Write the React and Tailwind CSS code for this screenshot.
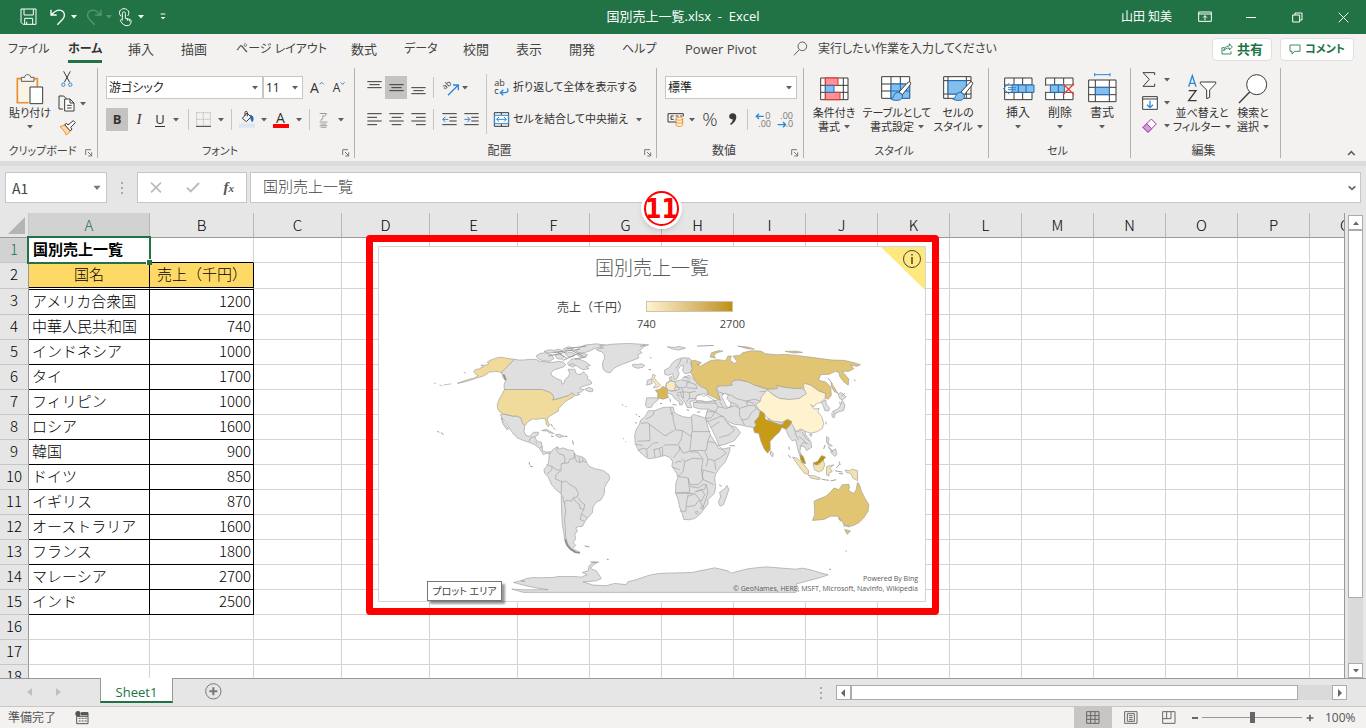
import React from "react";

const UI_FONT = "[font-family:'Open_Sans','Noto_Sans_CJK_JP',sans-serif]";
const CELL_FONT = "[font-family:'Noto_Sans_CJK_JP',sans-serif]";

// icons are drawn on a grid three times finer than the screen
function Icon({ w, h, children, className = "" }) {
  return (
    <svg
      width={w}
      height={h}
      viewBox={`0 0 ${w * 3} ${h * 3}`}
      fill="none"
      stroke="#3b3a39"
      strokeWidth="3"
      className={`shrink-0 overflow-visible ${className}`}
      aria-hidden="true"
    >
      {children}
    </svg>
  );
}

function Caret({ className = "text-[#605e5c]" }) {
  return (
    <svg width="6" height="4" viewBox="0 0 6 4" className={`shrink-0 ${className}`} aria-hidden="true">
      <path d="M0 0h6L3 3.5z" fill="currentColor" />
    </svg>
  );
}

function Sep({ className = "h-[22px]" }) {
  return <span className={`w-px shrink-0 bg-[#c8c6c4] ${className}`} />;
}

/* ---------- title bar ---------- */

function TitleBar() {
  return (
    <header className="grid h-[34px] shrink-0 grid-cols-[1fr_auto_1fr] items-center bg-[#217346] text-[12px] text-white">
      <div className="flex items-center pl-5">
        <button aria-label="上書き保存">
          <Icon w={18} h={18}>
            <path d="M3 3h45v46H9l-6-6zM12 3v18h28V3M14 49V31h24v18M20 49v-8" stroke="#fff" />
          </Icon>
        </button>
        <button aria-label="元に戻す" className="ml-3 flex items-center gap-1">
          <Icon w={17} h={18}>
            <path d="M3 5v16h17M4 20C16 8 26 4 35 8c10 5 11 17 3 26L22 50" stroke="#fff" strokeWidth="4" />
          </Icon>
          <Caret className="text-white" />
        </button>
        <button aria-label="やり直し" className="ml-2 flex items-center gap-1 opacity-25">
          <Icon w={17} h={18}>
            <path d="M48 5v16H31M47 20C35 8 25 4 16 8 6 13 5 25 13 34l16 16" stroke="#fff" strokeWidth="4" />
          </Icon>
          <Caret className="text-white" />
        </button>
        <button aria-label="タッチ/マウス モード" className="ml-1.5 flex items-center gap-1.5">
          <Icon w={14} h={18}>
            <path
              d="M9 25C-2 13 8 2 18 2s20 10 11 22M13 34V16c0-6 9-6 9 0v15l13 3c4 1 5 4 4 8-1 7-4 11-12 11-8 0-14-5-19-13-3-5 3-7 5-3zM28 32v6M34 34v6"
              stroke="#fff"
            />
          </Icon>
          <Caret className="text-white" />
        </button>
        <button aria-label="クイック アクセス ツール バーのユーザー設定" className="ml-4">
          <Icon w={6} h={8}>
            <path d="M2 3h14" stroke="#fff" />
            <path d="M2 12h14l-7 7z" fill="#fff" stroke="none" />
          </Icon>
        </button>
      </div>
      <h1 className="whitespace-pre text-[13px]">国別売上一覧.xlsx  -  Excel</h1>
      <div className="flex items-center justify-end">
        <span className="mr-2.5">山田 知美</span>
        <button aria-label="リボンの表示オプション" className="flex w-[46px] justify-center">
          <Icon w={14} h={12}>
            <path d="M2 3h38v28H2zM2 9h38M21 28V14M15 20l6-6 6 6" stroke="#fff" />
          </Icon>
        </button>
        <button aria-label="最小化" className="flex w-[46px] justify-center">
          <span className="h-px w-2.5 bg-white" />
        </button>
        <button aria-label="元に戻す (縮小)" className="flex w-[46px] justify-center">
          <Icon w={11} h={11}>
            <path d="M2 9h21v21H2zM9 9V3h21v21h-7" stroke="#fff" />
          </Icon>
        </button>
        <button aria-label="閉じる" className="flex w-[46px] justify-center">
          <Icon w={11} h={11}>
            <path d="M2 2l29 29M31 2L2 31" stroke="#fff" />
          </Icon>
        </button>
      </div>
    </header>
  );
}

const TABS = [
  ["ファイル", "w-[60px] text-[12px]"],
  ["ホーム", "w-[60px] text-[12px]"],
  ["挿入", "w-[53px]"],
  ["描画", "w-[55px]"],
  ["ページ レイアウト", "w-[115px] text-[12px]"],
  ["数式", "w-[53px]"],
  ["データ", "w-[59px] text-[12px]"],
  ["校閲", "w-[53px]"],
  ["表示", "w-[53px]"],
  ["開発", "w-[53px]"],
  ["ヘルプ", "w-[63px] text-[12px]"],
  ["Power Pivot", "w-[108px]"],
];

function TabRow() {
  return (
    <nav className="flex h-[30px] shrink-0 items-center bg-[#f3f2f1] pl-2 text-[13px] leading-[18px] text-[#444] [font-feature-settings:'palt']">
      {TABS.map(([name, width]) => (
        <button key={name} className={`shrink-0 text-left ${width}`}>
          {name === "ホーム" ? (
            <span className="inline-block border-b-[3px] border-[#217346] pt-[3px] font-bold leading-[22px] text-[#333]">
              {name}
            </span>
          ) : (
            name
          )}
        </button>
      ))}
      <label className="flex flex-1 items-center gap-2.5">
        <Icon w={15} h={16}>
          <circle cx="28" cy="16" r="13" stroke="#605e5c" />
          <path d="M19 26L3 43" stroke="#605e5c" />
        </Icon>
        <input
          type="text"
          placeholder="実行したい作業を入力してください"
          className="w-[220px] bg-transparent text-[12px] outline-none placeholder:text-[#444]"
        />
      </label>
      <button className="mr-2 flex h-[23px] w-[60px] items-center justify-center gap-1 rounded-sm border border-[#e1dfdd] bg-white font-bold text-[#217346]">
        <Icon w={12} h={12}>
          <path d="M11 14H3v19h27v-8M8 24c1-10 8-15 17-15V2l9 10-9 9v-6c-8 0-13 3-17 9z" stroke="#217346" strokeWidth="2.5" />
        </Icon>
        共有
      </button>
      <button className="mr-[12px] flex h-[23px] w-[74px] items-center justify-center gap-1 rounded-sm border border-[#e1dfdd] bg-white text-[11px] font-bold text-[#217346]">
        <Icon w={12} h={11}>
          <path d="M3 3h30v19H17l-8 8v-8H3z" stroke="#217346" strokeWidth="2.5" />
        </Icon>
        コメント
      </button>
    </nav>
  );
}

/* ---------- ribbon ---------- */

function Group({ label, width, launcher, size = "text-[12px]", children }) {
  return (
    <section className={`flex h-[90px] shrink-0 flex-col border-r border-[#b3b0ad] ${width}`}>
      <div className="h-[77px]">{children}</div>
      <div className="flex h-[14px] items-center pr-1">
        <h2 className={`flex-1 whitespace-nowrap text-center leading-[14px] text-[#444] ${size}`}>{label}</h2>
        {launcher && (
          <button aria-label={`${label}の設定`} className="pt-1">
            <Icon w={8} h={8}>
              <path d="M2 18V2h16M9 9l10 10M20 10v11H10" stroke="#605e5c" strokeWidth="2.5" />
            </Icon>
          </button>
        )}
      </div>
    </section>
  );
}

function BigButton({ icon, line1, line2, width, size = "text-[11px]" }) {
  return (
    <button className={`flex shrink-0 flex-col items-center pt-1 leading-[14px] text-[#333] ${width} ${size}`}>
      <span className="flex h-[34px] items-center">{icon}</span>
      <span className="whitespace-nowrap">{line1}</span>
      <span className="flex h-[14px] items-center gap-1 whitespace-nowrap">
        {line2}
        <Caret />
      </span>
    </button>
  );
}

function Tool({ label, on, children, className = "w-[22px]" }) {
  return (
    <button
      aria-label={label}
      className={`flex h-[23px] shrink-0 items-center justify-center ${on ? "bg-[#c5c3c1]" : ""} ${className}`}
    >
      {children}
    </button>
  );
}

function Combo({ label, value, width }) {
  return (
    <label className={`relative flex h-[23px] shrink-0 items-center border border-[#c8c6c4] bg-white ${width}`}>
      <select aria-label={label} defaultValue={value} className="w-full appearance-none bg-transparent px-[2px] text-[12px] text-[#222] outline-none">
        <option>{value}</option>
      </select>
      <Caret className="pointer-events-none absolute right-1 text-[#605e5c]" />
    </label>
  );
}

function ClipboardGroup() {
  return (
    <Group label="クリップボード" width="w-[98px]" size="text-[11px]" launcher>
      <div className="flex pl-1">
        <BigButton
          width="w-[52px]"
          line1="貼り付け"
          icon={
            <Icon w={28} h={31}>
              <path d="M17 14H4v72h34M54 14h10v24" stroke="#e8912d" strokeWidth="5" />
              <path d="M9 18h50v20H40v45H9z" fill="#fdf3e4" stroke="none" />
              <path d="M16 22V10h10c0-11 18-11 18 0h10v12z" fill="#f3f2f1" stroke="#605e5c" />
              <path d="M42 39h38v50H42z" fill="#fff" />
            </Icon>
          }
        />
        <div className="flex flex-col gap-px">
          <Tool label="切り取り">
            <Icon w={12} h={17}>
              <path d="M8 1l18 33M28 1L10 34" />
              <circle cx="7" cy="41" r="5" stroke="#2b88d8" />
              <circle cx="28" cy="41" r="5" stroke="#2b88d8" />
            </Icon>
          </Tool>
          <Tool label="コピー" className="w-[32px] gap-[5px]">
            <Icon w={17} h={17}>
              <path d="M15 42H3V3h14l9 9v5" />
              <path d="M20 12h16l12 12v24H20zM36 12v12h12M27 31h14M27 39h14" fill="#fff" />
            </Icon>
            <Caret />
          </Tool>
          <Tool label="書式のコピー/貼り付け">
            <Icon w={17} h={16}>
              <path d="M3 20l14-5 18 18-13 12C17 35 10 26 3 20z" fill="#fdd9a8" stroke="#e8912d" />
              <path d="M17 14l6-4 4 5L43 2l6 6-14 14 4 5-5 6z" fill="#fff" />
            </Icon>
          </Tool>
        </div>
      </div>
    </Group>
  );
}

function FontGroup() {
  return (
    <Group label="フォント" width="w-[257px]" size="text-[11px]" launcher>
      <div className="flex flex-col gap-[9px] pl-2 pt-2">
        <div className="flex">
          <Combo label="フォント" value="游ゴシック" width="w-[157px]" />
          <Combo label="フォント サイズ" value="11" width="w-[40px]" />
          <Tool label="フォント サイズの拡大" className="ml-[3px] w-[22px] text-[14px] text-[#333]">
            A
            <Icon w={5} h={14}>
              <path d="M2 10l6-6 6 6" stroke="#2b88d8" />
            </Icon>
          </Tool>
          <Tool label="フォント サイズの縮小" className="w-[22px] text-[12px] text-[#333]">
            A
            <Icon w={5} h={14}>
              <path d="M2 4l6 6 6-6" stroke="#2b88d8" />
            </Icon>
          </Tool>
        </div>
        <div className="flex items-center text-[#333]">
          <Tool label="太字" on>
            <span className="text-[13px] font-bold">B</span>
          </Tool>
          <Tool label="斜体">
            <span className="font-['Liberation_Serif'] text-[15px] italic">I</span>
          </Tool>
          <Tool label="下線" className="w-[34px] gap-2">
            <span className="border-b border-[#333] text-[13px] leading-[13px]">U</span>
            <Caret />
          </Tool>
          <Sep className="ml-1 h-[21px]" />
          <Tool label="罫線" className="ml-0.5 w-[38px] gap-[7px]">
            <Icon w={15} h={15}>
              <path d="M2 2h42M2 22h42M2 2v38M22 2v38M43 2v38" stroke="#8a8886" strokeWidth="2" strokeDasharray="3 3" />
              <path d="M0 43h45" />
            </Icon>
            <Caret />
          </Tool>
          <Sep className="ml-0.5 h-[21px]" />
          <Tool label="塗りつぶしの色" className="ml-1 w-[34px] gap-1.5">
            <Icon w={16} h={17}>
              <path d="M10 22L24 6l12 12-14 14zM18 14V4c0-4 7-4 7 0v12" />
              <path d="M35 13c8 2 9 12 5 19-3-3-5-8-5-19z" fill="#1f6bb5" stroke="#1f6bb5" />
              <path d="M0 37h48v13H0z" fill="#d9e7f5" stroke="none" />
            </Icon>
            <Caret />
          </Tool>
          <Tool label="フォントの色" className="w-[34px] gap-[7px]">
            <span className="w-4 border-b-4 border-[#f00] text-center text-[14px] leading-[13px]">A</span>
            <Caret />
          </Tool>
          <Sep className="ml-[5px] h-[21px]" />
          <Tool label="ふりがなの表示/非表示" className="ml-1 w-[34px] gap-2.5 text-[#8a8886]">
            <span className="flex flex-col items-center text-[9px] leading-[9px]">
              ア
              <Icon w={9} h={7}>
                <path d="M2 3h23M5 9h17M2 14h23M5 19h17" stroke="#797775" strokeWidth="2" />
              </Icon>
            </span>
            <Caret />
          </Tool>
        </div>
      </div>
    </Group>
  );
}

function Lines({ d }) {
  return (
    <Icon w={15} h={15}>
      <path d={d} />
    </Icon>
  );
}

function AlignGroup() {
  return (
    <Group label="配置" width="w-[302px]" launcher>
      <div className="flex pl-2 pt-2">
        <div className="flex flex-col gap-[9px]">
          <div className="flex items-center">
            <Tool label="上揃え"><Lines d="M1 5h43M7 14h31M1 23h43" /></Tool>
            <Tool label="上下中央揃え" on><Lines d="M1 14h43M7 23h31M1 32h43" /></Tool>
            <Tool label="下揃え"><Lines d="M1 23h43M7 32h31M1 41h43" /></Tool>
            <Sep className="ml-1 h-[21px]" />
            <Tool label="方向" className="ml-1 w-[34px] gap-0.5">
              <Icon w={18} h={16}>
                <text x="6" y="28" fontSize="24" fill="#3b3a39" stroke="none" transform="rotate(-40 10 26)">ab</text>
                <path d="M18 46l30-30M33 15h16v16" stroke="#2b88d8" strokeWidth="4" />
              </Icon>
              <Caret />
            </Tool>
          </div>
          <div className="flex items-center">
            <Tool label="左揃え"><Lines d="M1 5h43M1 16h29M1 27h43M1 38h29" /></Tool>
            <Tool label="中央揃え"><Lines d="M1 5h43M8 16h29M1 27h43M8 38h29" /></Tool>
            <Tool label="右揃え"><Lines d="M1 5h43M15 16h29M1 27h43M15 38h29" /></Tool>
            <Sep className="ml-1 h-[21px]" />
            <Tool label="インデントを減らす" className="ml-1 w-[22px]">
              <Icon w={15} h={15}>
                <path d="M1 5h43M22 16h22M22 27h22M1 38h43" />
                <path d="M19 22H3M10 14l-8 8 8 8" stroke="#2b88d8" />
              </Icon>
            </Tool>
            <Tool label="インデントを増やす">
              <Icon w={15} h={15}>
                <path d="M1 5h43M22 16h22M22 27h22M1 38h43" />
                <path d="M1 22h16M10 14l8 8-8 8" stroke="#2b88d8" />
              </Icon>
            </Tool>
          </div>
        </div>
        <Sep className="ml-1 -mt-[2px] h-[60px]" />
        <div className="flex flex-col gap-[9px] pl-[7px] text-[11px] text-[#333]">
          <button className="flex h-[23px] items-center gap-1 whitespace-nowrap">
            <Icon w={15} h={17}>
              <text x="1" y="22" fontSize="27" fill="#3b3a39" stroke="none">ab</text>
              <text x="1" y="46" fontSize="27" fill="#3b3a39" stroke="none">c</text>
              <path d="M40 28c6 9 0 13-8 13H20M28 32l-9 9 9 8" stroke="#2b88d8" strokeWidth="4" />
            </Icon>
            折り返して全体を表示する
          </button>
          <button className="flex h-[23px] items-center gap-1 whitespace-nowrap">
            <Icon w={15} h={15}>
              <path d="M1 2h43v41H1zM22 2v8M22 35v8" />
              <path d="M2 10h41v25H2z" fill="#fff" stroke="#2b88d8" />
              <path d="M8 22h29M15 15l-7 7 7 7M30 15l7 7-7 7" stroke="#2b88d8" />
            </Icon>
            セルを結合して中央揃え
            <span className="ml-1"><Caret /></span>
          </button>
        </div>
      </div>
    </Group>
  );
}

function NumberGroup() {
  return (
    <Group label="数値" width="w-[147px]" launcher>
      <div className="flex flex-col gap-[9px] pl-2 pt-2">
        <Combo label="数値の書式" value="標準" width="w-[132px]" />
        <div className="flex items-center text-[#333]">
          <Tool label="通貨表示形式" className="w-[32px] gap-[5px]">
            <Icon w={17} h={15}>
              <path d="M28 30H3V5h46v8M20 12h-8v10h8M26 12h8M40 12h6" />
              <path d="M27 20v18c0 7 20 7 20 0V20c0-6-20-6-20 0c0 6 20 6 20 0M27 29c0 6 20 6 20 0" fill="#fff3e0" stroke="#e8912d" />
            </Icon>
            <Caret />
          </Tool>
          <Tool label="パーセント スタイル" className="w-[26px] text-[19px] font-light">%</Tool>
          <Tool label="桁区切りスタイル" className="w-[20px]">
            <Icon w={8} h={13}>
              <path d="M11 1c16 0 15 24-5 35l-3-3c6-5 9-10 8-14C-3 20-3 2 11 1z" fill="#3b3a39" stroke="none" />
            </Icon>
          </Tool>
          <Sep className="ml-1 h-[21px]" />
          <Tool label="小数点以下の表示桁数を増やす" className="ml-1 w-[22px]">
            <Icon w={16} h={16}>
              <path d="M26 13H4M12 5l-8 8 8 8" stroke="#2b88d8" strokeWidth="4" />
              <text x="31" y="22" fontSize="27" fill="#797775" stroke="none">0</text>
              <text x="10" y="46" fontSize="27" fill="#797775" stroke="none">.00</text>
            </Icon>
          </Tool>
          <Tool label="小数点以下の表示桁数を減らす">
            <Icon w={16} h={16}>
              <path d="M2 38h24M18 30l8 8-8 8" stroke="#2b88d8" strokeWidth="4" />
              <text x="10" y="22" fontSize="27" fill="#797775" stroke="none">.00</text>
              <text x="26" y="46" fontSize="27" fill="#797775" stroke="none">.0</text>
            </Icon>
          </Tool>
        </div>
      </div>
    </Group>
  );
}

const brush = (
  <>
    <path d="M87 24c4 2 2 6-2 12L64 62l-10-8 24-26c4-4 7-5 9-4z" fill="#fff" />
    <path d="M54 55l10 8c2 8-4 16-14 16-10 1-18-2-22-5 8 0 8-4 11-10 3-7 8-10 15-9z" fill="#83beec" stroke="#1f6bb5" />
  </>
);

function StyleGroup() {
  return (
    <Group label="スタイル" width="w-[185px]" size="text-[11px]">
      <div className="flex pl-px">
        <BigButton
          width="w-[58px]"
          line1="条件付き"
          line2="書式"
          icon={
            <Icon w={29} h={24}>
              <path d="M2 3h82v65H2zM2 25h82M2 46h82M16 3v65M70 3v65" fill="#fff" />
              <path d="M16 3h38v22H16zM16 46h44v22H16z" fill="#ff9199" stroke="#e0301e" />
              <path d="M16 25h26v21H16z" fill="#83beec" stroke="#1f6bb5" />
            </Icon>
          }
        />
        <BigButton
          width="w-[68px]"
          line1="テーブルとして"
          line2="書式設定"
          icon={
            <Icon w={32} h={30}>
              <path d="M2 8h84v65H2zM2 30h84M2 51h84M30 8v65M58 8v65" fill="#fff" />
              <path d="M30 30h56v43H30z" fill="#83beec" stroke="none" />
              <path d="M30 30h56v43H30zM30 51h56M58 30v43" stroke="#1f6bb5" />
              {brush}
            </Icon>
          }
        />
        <BigButton
          width="w-[54px]"
          line1="セルの"
          line2="スタイル"
          icon={
            <Icon w={31} h={30}>
              <path d="M2 8h82v65H2zM2 20h82M2 60h82M15 8v65M70 8v65" fill="#fff" />
              <path d="M15 20h55v40H15z" fill="#83beec" stroke="#1f6bb5" />
              {brush}
            </Icon>
          }
        />
      </div>
    </Group>
  );
}

function CellGroup() {
  return (
    <Group label="セル" width="w-[142px]" size="text-[11px]">
      <div className="flex pl-2">
        <BigButton
          width="w-[42px]"
          size="text-[12px]"
          line1="挿入"
          icon={
            <Icon w={33} h={24}>
              <path d="M8 3h82v65H8zM36 3v65M62 3v65M8 24h82M8 46h82" fill="#fff" />
              <path d="M30 24h66v22H30zM49 24v22M72 24v22" fill="#83beec" stroke="#1f6bb5" />
              <path d="M42 32H18M42 38H18M22 18L4 35l18 17" stroke="#2b88d8" />
            </Icon>
          }
        />
        <BigButton
          width="w-[42px]"
          size="text-[12px]"
          line1="削除"
          icon={
            <Icon w={31} h={24}>
              <path d="M2 3h82v65H2zM29 3v65M56 3v65M2 24h82M2 46h82" fill="#fff" />
              <path d="M0 26h16v18H0zM60 26h28v18H60z" fill="#f3f2f1" stroke="none" />
              <path d="M16 24h42v22H16zM40 24v22" fill="#83beec" stroke="#1f6bb5" />
              <path d="M54 20l33 33M87 20L54 53" stroke="#e8423a" strokeWidth="4" />
            </Icon>
          }
        />
        <BigButton
          width="w-[42px]"
          size="text-[12px]"
          line1="書式"
          icon={
            <Icon w={29} h={34}>
              <path d="M2 24h82v65H2zM22 24v65M64 24v65M2 46h82M2 68h82" fill="#fff" />
              <path d="M22 46h42v22H22z" fill="#83beec" stroke="#1f6bb5" />
              <path d="M20 8h46M20 3v10M66 3v10" stroke="#2b88d8" />
            </Icon>
          }
        />
      </div>
    </Group>
  );
}

function EditGroup() {
  return (
    <Group label="編集" width="w-[150px]">
      <div className="flex pl-2">
        <div className="flex w-[34px] flex-col">
          <Tool label="オート SUM" className="w-[34px] gap-2">
            <Icon w={14} h={15}>
              <path d="M38 9V2H3l19 20L3 43h35v-8" />
            </Icon>
            <Caret />
          </Tool>
          <Tool label="フィル" className="w-[34px] gap-1.5">
            <Icon w={16} h={14}>
              <path d="M2 2h44v38H2zM2 9h44" fill="#fff" />
              <path d="M24 14v20M15 26l9 9 9-9" stroke="#2b88d8" strokeWidth="4" />
            </Icon>
            <Caret />
          </Tool>
          <Tool label="クリア" className="w-[34px] gap-1.5">
            <Icon w={16} h={15}>
              <path d="M3 28L28 3l15 15-25 25z" fill="#fff" stroke="#a33bab" />
              <path d="M3 28l11-11 15 15-11 11z" fill="#d59ddb" stroke="#a33bab" />
            </Icon>
            <Caret />
          </Tool>
        </div>
        <BigButton
          width="w-[58px]"
          line1="並べ替えと"
          line2="フィルター"
          icon={
            <Icon w={30} h={30}>
              <path d="M5 38L16 5l11 33M9 28h14" stroke="#2b88d8" strokeWidth="4" />
              <path d="M5 50h22L5 80h24" strokeWidth="4" />
              <path d="M40 24h46v5L68 48v22l-9 4V48L40 29z" fill="#fff" />
            </Icon>
          }
        />
        <BigButton
          width="w-[44px]"
          line1="検索と"
          line2="選択"
          icon={
            <Icon w={30} h={30}>
              <circle cx="56" cy="32" r="30" fill="#fff" />
              <path d="M35 54L3 87" strokeWidth="4" />
            </Icon>
          }
        />
      </div>
    </Group>
  );
}

function Ribbon() {
  return (
    <div className="flex h-[97px] shrink-0 bg-[#f3f2f1] pt-1 [font-feature-settings:'palt']">
      <ClipboardGroup />
      <FontGroup />
      <AlignGroup />
      <NumberGroup />
      <StyleGroup />
      <CellGroup />
      <EditGroup />
      <div className="flex flex-1 items-end justify-end pb-1 pr-2.5">
        <button aria-label="リボンを折りたたむ">
          <Icon w={9} h={7}>
            <path d="M3 15l10-10 10 10" stroke="#605e5c" strokeWidth="5" />
          </Icon>
        </button>
      </div>
    </div>
  );
}

function FormulaBar() {
  return (
    <div className="flex h-[52px] shrink-0 items-start border-t-[5px] border-[#dcdcdc] bg-[#e6e6e6] pl-[5px] pr-[5px] pt-1.5 text-[#444]">
      <label className="relative flex h-[31px] w-[102px] shrink-0 items-center border border-[#c6c6c6] bg-white">
        <input aria-label="名前ボックス" defaultValue="A1" className={`w-full bg-transparent px-1.5 pt-0.5 text-[14px] outline-none ${CELL_FONT}`} />
        <Caret className="absolute right-1.5 scale-125 text-[#777]" />
      </label>
      <span className="flex h-[31px] w-[30px] flex-col items-center justify-center gap-[3px]">
        <i className="size-0.5 bg-[#aaa]" />
        <i className="size-0.5 bg-[#aaa]" />
        <i className="size-0.5 bg-[#aaa]" />
      </span>
      <div className="mr-[3px] flex h-[31px] w-[110px] shrink-0 items-center justify-around border border-[#c6c6c6] bg-white">
        <button aria-label="キャンセル">
          <Icon w={12} h={11}>
            <path d="M3 2l30 29M33 2L3 31" stroke="#bbb" strokeWidth="5" />
          </Icon>
        </button>
        <button aria-label="入力">
          <Icon w={14} h={11}>
            <path d="M3 17l11 11L39 3" stroke="#bbb" strokeWidth="6" />
          </Icon>
        </button>
        <button aria-label="関数の挿入" className="font-['Liberation_Serif'] text-[15px] font-bold italic leading-5 text-[#555]">
          f<span className="text-[11px]">x</span>
        </button>
      </div>
      <label className="flex h-[31px] flex-1 items-center border border-[#c6c6c6] bg-white pr-1">
        <input aria-label="数式バー" defaultValue="国別売上一覧" className={`flex-1 bg-transparent px-3 pb-0.5 text-[15px] font-light outline-none ${CELL_FONT}`} />
        <Icon w={8} h={6}>
          <path d="M2 4l10 9 10-9" stroke="#666" strokeWidth="5" />
        </Icon>
      </label>
    </div>
  );
}

/* ---------- sheet ---------- */

const COLUMNS = ["A", "B", "C", "D", "E", "F", "G", "H", "I", "J", "K", "L", "M", "N", "O", "P", "Q"];

const SALES = [
  ["アメリカ合衆国", 1200],
  ["中華人民共和国", 740],
  ["インドネシア", 1000],
  ["タイ", 1700],
  ["フィリピン", 1000],
  ["ロシア", 1600],
  ["韓国", 900],
  ["ドイツ", 850],
  ["イギリス", 870],
  ["オーストラリア", 1600],
  ["フランス", 1800],
  ["マレーシア", 2700],
  ["インド", 2500],
];

function colWidth(i) {
  if (i === 0) return "w-[121px]";
  if (i === 1) return "w-[104px]";
  return i < 5 ? "w-[88px]" : "w-[72px]";
}

function rowHead(n, on) {
  return (
    <th
      scope="row"
      className={`border-b border-r border-b-[#c6c6c6] border-r-[#999] p-0 text-center font-light ${
        on ? "bg-[#d2d2d2] text-[#217346]" : "bg-[#e6e6e6] text-black"
      }`}
    >
      {n}
    </th>
  );
}

function Blank({ from }) {
  return COLUMNS.slice(from).map((c) => <td key={c} className="border-b border-r border-[#d4d4d4] p-0" />);
}

function Grid() {
  return (
    <table className={`w-[1382px] table-fixed border-separate border-spacing-0 bg-white text-[15px] font-light leading-[22px] text-black ${CELL_FONT}`}>
      <colgroup>
        <col className="w-[29px]" />
        {COLUMNS.map((c, i) => (
          <col key={c} className={colWidth(i)} />
        ))}
      </colgroup>
      <thead>
        <tr className="h-[25px]">
          <th aria-label="すべて選択" className="border-b border-r border-b-[#999] border-r-[#c6c6c6] bg-[#e6e6e6] p-0">
            <Icon w={17} h={17} className="ml-2">
              <path d="M51 0v51H0z" fill="#b4b4b4" stroke="none" />
            </Icon>
          </th>
          {COLUMNS.map((c, i) => (
            <th
              key={c}
              scope="col"
              className={`border-b border-r border-b-[#999] border-r-[#b8b8b8] p-0 font-light ${
                i === 0 ? "bg-[#d2d2d2] text-[#217346]" : "bg-[#e6e6e6]"
              }`}
            >
              {c}
            </th>
          ))}
        </tr>
      </thead>
      <tbody className="align-top">
        <tr className="h-[25px]">
          {rowHead(1, true)}
          <td className="border-b border-r border-b-black border-r-[#d4d4d4] p-0 pl-1 font-bold">国別売上一覧</td>
          <td className="border-b border-r border-b-black border-r-[#d4d4d4] p-0" />
          <Blank from={2} />
        </tr>
        <tr className="h-[26px]">
          {rowHead(2)}
          <td className="border-b border-r border-b-white border-r-black bg-[#ffd966] p-0 text-center shadow-[inset_0_-1px_0_#000]">国名</td>
          <td className="border-b border-r border-b-white border-r-black bg-[#ffd966] p-0 pl-[7px] shadow-[inset_0_-1px_0_#000]">売上（千円）</td>
          <Blank from={2} />
        </tr>
        {SALES.map(([country, amount], i) => (
          <tr key={country} className={i === 0 ? "h-[26px]" : "h-[25px]"}>
            {rowHead(i + 3)}
            <td className={`border-b border-r border-black p-0 pl-[3px] ${i === 0 ? "border-t" : ""}`}>{country}</td>
            <td className={`border-b border-r border-black p-0 pr-0.5 text-right ${i === 0 ? "border-t" : ""}`}>{amount}</td>
            <Blank from={2} />
          </tr>
        ))}
        {[16, 17, 18].map((n) => (
          <tr key={n} className="h-[25px]">
            {rowHead(n)}
            <Blank from={0} />
          </tr>
        ))}
      </tbody>
    </table>
  );
}

/* ---------- map chart ---------- */

const GRAY_LAND = [
  // Canada
  "M443 372L403 410 410 420 417 435 412 447 412 458 413 463 526 463 530 466 546 470 555 475 562 486 558 495 575 490 590 486 605 482 617 473 626 482 640 478 632 474 645 470 653 463 640 461 645 455 662 450 677 445 673 437 664 432 664 422 655 414 652 409 646 415 636 418 628 413 625 402 605 402 610 415 605 425 595 433 592 445 587 447 585 436 570 430 555 420 553 412 562 404 575 400 590 395 598 388 590 380 575 378 560 381 540 380 520 378 508 372 490 372 470 374 455 374Z",
  "M655 462L668 456 680 462 678 470 664 468Z",
  // arctic islands
  "M603 384L614 372 630 369 645 374 658 380 672 390 660 394 668 400 650 403 640 398 630 391 618 388 608 392Z",
  "M508 362L520 354 538 352 556 358 562 370 548 378 528 376 515 370Z",
  "M532 348L548 343 562 345 575 341 590 346 578 352 560 351 545 353Z",
  "M565 360L580 356 592 362 588 372 572 370Z",
  "M596 355L612 350 626 356 620 364 604 364Z",
  "M590 340L606 334 622 338 612 345 598 346Z",
  "M626 346L640 336 655 329 690 325 718 329 704 336 685 339 672 346 655 352 638 352Z",
  "M632 356L650 354 664 358 654 366 638 364Z",
  "M610 388L620 384 626 392 616 396Z",
  // Greenland, Iceland
  "M707 349L695 346 690 342 712 337 700 331 740 326 790 324 848 328 835 333 821 345 828 352 815 358 818 368 805 373 790 379 770 386 750 395 740 402 733 412 722 411 712 404 709 393 709 380 715 370 714 358Z",
  "M798 389L805 386 815 388 825 385 836 390 830 396 815 399 803 395Z",
  // Mexico and Central America
  "M400 538L410 537 425 540 438 543 450 543 462 548 468 562 474 572 472 590 478 602 490 604 500 592 516 592 514 600 505 605 510 618 524 622 526 632 528 648 540 652 550 650 552 657 540 656 530 659 518 640 505 630 487 622 470 617 450 608 438 595 428 580 418 562 408 552Z",
  "M403 548L410 560 418 572 425 582 420 584 408 566Z",
  "M525 587L538 583 550 589 562 596 550 594 540 588Z",
  "M566 600L578 598 592 604 578 608Z",
  // South America
  "M548 660L556 647 565 640 573 635 578 643 590 639 605 645 620 647 624 655 632 663 645 665 657 673 662 685 668 694 685 702 710 707 728 720 731 732 722 745 715 758 714 777 705 795 690 803 680 817 678 835 665 849 655 862 648 876 635 877 628 880 633 890 625 900 628 913 620 925 628 933 618 943 640 954 625 955 610 945 600 933 594 915 592 895 587 870 586 845 585 815 584 777 570 767 555 750 545 727 534 715 532 705 540 695 546 683Z",
  // Antarctica
  "M440 1045L462 1040 480 1033 500 1030 520 1031 560 1030 575 1027 600 1027 625 1027 645 1029 662 1022 648 1015 665 1010 668 995 680 985 692 985 680 993 672 1003 690 1010 700 1025 705 1033 690 1040 670 1042 650 1043 680 1053 720 1055 745 1048 765 1050 780 1052 785 1043 810 1037 830 1030 850 1023 880 1018 905 1017 980 1015 1002 1010 1047 1001 1087 1010 1097 1017 1122 1010 1152 1003 1202 998 1252 1002 1292 1005 1312 1002 1337 1007 1362 1015 1390 1022 1367 1030 1322 1042 1292 1050 1300 1062 1292 1075 470 1075 435 1065 470 1067 545 1067 500 1060 470 1053Z",
];

// drawn in a frame whose origin is shifted 822 to the right
const GRAY_EAST = [
  // Africa, Madagascar
  "M43 527L25 527 15 545 2 555 -2 568 -12 585 -16 600 -15 625 -8 640 0 652 18 668 28 672 50 668 75 662 90 668 98 680 96 695 100 700 110 715 114 728 108 745 107 775 115 795 120 820 128 840 132 855 148 856 165 852 182 838 192 825 205 808 205 795 225 775 228 755 225 730 228 718 240 700 258 680 270 650 272 638 245 643 236 640 225 620 212 600 205 578 198 550 185 545 160 538 150 548 130 545 110 537 103 530 100 516 70 517Z",
  "M262 752L268 765 262 782 252 810 242 815 236 803 243 787 240 773 255 763Z",
  // Arabia
  "M198 548L215 580 232 615 238 633 260 627 285 617 303 593 290 577 275 572 262 562 250 542 225 530 203 530Z",
  // Europe
  "M20 488L48 488 56 492 48 500 38 508 35 516 22 518 16 510Z",
  "M80 442L92 437 105 438 125 434 132 425 150 420 160 430 200 460 210 478 190 476 172 480 165 495 150 500 156 518 142 517 135 500 124 488 112 476 118 490 130 500 128 508 120 510 118 500 104 490 96 478 82 474 75 460Z",
  "M75 418L73 405 88 397 98 382 110 373 128 367 148 368 157 377 153 385 158 400 150 413 135 415 128 405 132 390 122 392 113 405 118 415 112 430 103 434 98 415 86 420Z",
  "M88 426L96 424 97 434 90 437Z",
  "M22 435L34 431 37 445 20 450Z",
  "M82 334L102 336 117 333 137 338 117 344 100 341Z",
  // Turkey, Middle East, Central Asia
  "M160 502L180 497 200 501 225 497 240 492 235 470 232 460 240 450 275 440 290 433 330 440 360 455 385 462 400 480 380 500 372 540 347 578 325 575 305 570 285 568 265 560 250 543 240 545 215 556 202 560 198 545 204 522 180 522 162 516Z",
  // Mongolia, Korea, Japan
  "M383 463L412 451 440 457 480 459 500 465 505 475 480 491 450 494 420 490 400 478Z",
  "M546 502L560 494 562 507 572 520 568 528 557 526 553 512Z",
  "M598 476L606 472 622 485 610 494 602 490Z",
  "M610 496L618 510 614 526 600 530 588 536 580 530 596 522 604 512Z",
  "M578 536L588 538 586 548 580 546Z",
  // Nepal, Indochina, Sri Lanka, Philippines
  "M385 548L400 556 428 562 430 570 410 566 388 556Z",
  "M440 583L450 573 460 560 466 580 475 591 488 583 500 585 498 597 515 620 518 637 502 647 498 637 485 633 482 650 490 664 480 658 474 635 470 615 458 617 448 603Z",
  "M394 648L402 657 400 666 393 660Z",
  "M563 605L570 610 568 625 580 633 572 634 562 622Z",
  "M574 650L590 642 594 658 588 665 580 658Z",
];

const COLORED = [
  ["#f0db9d", "M443 372L420 369 408 366 395 366 383 370 372 374 361 380 366 386 356 390 342 389 350 395 340 398 338 401 328 402 322 405 321 411 328 418 334 421 322 428 300 434 272 443 272 445 300 438 330 428 350 422 360 416 368 410 376 410 384 408 395 409 403 412Z"],
  ["#f0db9d", "M413 463L526 463 546 470 555 475 562 486 558 495 580 490 590 486 605 482 617 473 623 478 620 486 605 494 593 502 585 512 577 520 575 528 560 537 547 545 542 552 545 562 549 570 545 575 539 568 537 552 525 550 510 553 497 552 484 560 474 572 468 565 462 548 450 543 438 543 425 540 410 537 398 530 392 520 391 508 397 492 405 478Z"],
];

const COLORED_EAST = [
  // Russia and its islands
  ["#e2c572", "M153 378L165 375 185 382 178 388 172 387 182 393 200 382 215 375 235 373 258 376 265 362 275 362 272 375 285 385 292 378 280 362 300 360 310 352 335 346 365 347 378 355 412 358 440 357 470 360 510 365 540 369 580 374 615 375 645 382 665 388 655 393 635 390 645 400 630 408 610 408 630 432 628 450 615 440 603 425 600 412 590 408 570 417 545 418 538 435 560 440 575 455 577 480 568 492 558 488 560 475 540 468 515 450 498 445 495 458 470 460 430 455 412 450 415 460 395 462 380 460 365 455 345 450 325 440 300 434 285 435 275 442 278 450 255 452 235 452 230 460 235 475 243 496 225 488 205 478 202 462 185 455 172 445 160 425 152 410 158 400Z"],
  ["#e2c572", "M577 443L585 455 597 475 585 468 578 455Z"],
  ["#e2c572", "M211 365L216 352 235 346 250 347 232 352 222 360 228 368Z"],
  ["#e2c572", "M295 332L325 335 345 341 325 340Z"],
  ["#e2c572", "M438 348L470 347 490 351 465 353Z"],
  // UK, France, Germany
  ["#fbe9bb", "M38 418L46 420 43 428 50 438 62 450 56 455 40 458 48 448 42 440 36 430Z"],
  ["#d9b754", "M46 465L60 462 68 453 84 463 81 475 86 487 70 492 52 488 54 475Z"],
  ["#fbeabf", "M80 445L92 437 105 440 107 455 101 467 86 466 78 455Z"],
  // China
  ["#fff2cf", "M348 508L362 500 366 485 380 468 385 465 400 478 420 490 450 493 480 490 502 475 495 462 492 447 498 445 515 450 540 468 560 475 558 490 548 500 530 507 525 515 515 509 525 522 540 520 536 530 548 545 554 565 550 580 535 590 515 595 500 590 485 582 470 590 460 570 450 558 430 562 400 558 385 548 370 535 360 525Z"],
  ["#fff2cf", "M511 597L519 598 515 605Z"],
  // India
  ["#c89b17", "M363 527L375 535 378 553 410 565 425 570 432 567 432 560 445 553 458 560 450 573 440 583 428 577 420 592 410 600 392 620 393 643 385 655 375 643 365 620 358 595 345 593 342 580 350 570 345 560 358 545Z"],
  // Malaysia
  ["#bf9000", "M482 660L492 665 500 687 490 684 484 673Z"],
  // Indonesia
  ["#f5e3ae", "M522 687L540 690 552 673 557 690 552 705 540 712 526 705Z"],
  ["#bf9000", "M522 685L535 680 548 662 560 667 545 683 532 691Z"],
  ["#f5e3ae", "M460 667L473 670 495 690 508 707 508 720 495 715 478 693Z"],
  ["#f5e3ae", "M508 722L525 723 545 731 540 735 515 730Z"],
  ["#f5e3ae", "M563 695L585 690 572 700 580 710 570 715 570 724 562 720Z"],
  ["#f5e3ae", "M618 706L632 708 640 703 656 708 656 738 642 730 635 715 625 715Z"],
  // Australia
  ["#e2c572", "M525 800L535 795 560 785 570 777 585 760 600 765 610 750 630 749 632 760 628 767 645 777 652 765 656 743 662 750 668 770 678 790 690 810 688 830 675 850 660 865 640 875 615 873 610 860 600 855 598 845 575 845 555 855 520 858 527 840 526 815Z"],
  ["#e2c572", "M617 885L635 890 625 900Z"],
];

const BORDERS = [
  // South America
  "M573 637L570 647 578 657 592 661 596 673 594 685 584 687 584 705M594 685L605 685 610 673 622 671 624 655M624 657L630 680 640 683 638 667M640 683L650 679 648 667M650 679L660 683M540 690L556 695 556 705 542 717M556 695L570 705 584 707 568 720 567 733 585 740 584 777M585 743L598 739 610 750 628 760 636 777 632 787 620 790 615 800 600 797 594 807 588 783M594 807L598 830 594 855 597 885 597 905 603 927 615 943M620 790L632 805 640 810 640 821 652 825 655 810 645 803 636 790M652 825L645 838 655 845 663 851M645 838L641 855 655 861",
  // Central America and the Aleutians
  "M487 620L492 608 505 606M505 620L512 628M520 638L528 636M200 443L206 445M217 449L226 452M230 449L252 446M290 411L297 413M404 412L410 430 418 438",
];

const BORDERS_EAST = [
  // Africa
  "M3 565L22 563M28 567L30 617 -8 619M22 563L75 603 105 585M98 530L100 555 108 585 128 587 155 605 155 597 158 590 155 545M158 590L212 590M155 605L150 645 158 655M128 587L125 610 115 630 75 630 70 635M118 633L120 645 100 670M118 633L130 655 158 647M125 670L135 680 160 670 190 673 175 653 158 650M158 647L200 647 205 615 212 600M205 620L225 623 245 640 260 655 240 670 225 677 205 673 195 650M205 673L200 695M225 677L228 705M190 705L225 715M190 705L188 733 222 750M135 680L130 710 115 725 145 730 150 750 175 750 190 735 185 705 190 675M105 685L115 680 125 680M98 697L120 705M145 730L150 773 107 775 160 777M145 780L140 805 138 830 120 830M145 785L165 777 180 795 165 813 140 817M165 773L185 765 195 780 185 800 178 795M150 755L175 760 190 750 200 750 195 763 170 770M200 750L205 770 200 790 190 817M180 800L190 817 188 823M-8 647L10 640 20 643 40 625 55 623M20 643L22 667M42 643L45 667M58 640L62 663M68 640L68 663M40 645L68 637M-14 628L8 632M43 527L40 540 18 553M92 518L95 540",
  // Europe
  "M107 455L125 458 140 455 142 440M107 447L120 462 105 467M125 458L130 470 112 472M130 470L150 472 168 468M142 440L168 448 172 460 142 458M150 472L148 490 165 490M130 470L132 490M120 470L130 490M92 468L110 466M148 490L140 500M125 368L118 385 108 400M145 370L140 385M133 425L150 430M128 436L152 438",
  // Middle East and Central Asia
  "M162 502L230 505M225 497L235 515 228 530 203 530M205 522L225 530 250 545M235 515L260 520 285 512 300 520 300 540 315 570M240 500L250 515M275 512L262 495 250 490 250 475 275 480 290 490 320 498 345 505M300 520L325 512 345 510 350 520 335 535 325 552 305 555M268 500L285 505 300 515M320 498L325 512M360 470L380 468M320 498L345 492 362 498M350 520L365 530M238 470L250 475M262 562L285 585 268 600 238 608M200 550L215 548 225 532M213 578L240 560",
  // Indochina
  "M466 580L470 600 478 615M478 605L490 612 500 625M488 590L500 610 512 620M485 633L492 622 508 628",
];

// scattered small islands and coast details
const ISLETS =
  "M210 589L216 592M221 593L229 599M487 682L489 690M489 694L498 696M553 567L558 575M560 578L566 584M553 603L561 605M594 604L602 605M618 617L621 629M655 935L669 938M672 983L698 984M722 975L727 976M560 351L640 342M600 340L660 332M545 362L600 350M590 375L640 352M575 352L600 368M615 345L650 362M626 372L660 364M767 509L771 511M778 514L781 514M809 538L813 540M818 544L822 545M807 563L812 564M771 610L773 613M778 620L780 622M462 1040L475 1042M852 366L856 368M848 402L855 404";
const ISLETS_EAST =
  "M172 332L222 330M0 332L15 330M60 506L66 505M90 490L92 500M98 508L110 510M140 524L148 526M172 532L182 530M602 500L604 508M562 560L560 568M548 734L570 737M574 739L592 735M592 700L602 688M600 680L604 690M588 708L610 712M600 716L612 718M558 630L554 642M566 635L578 645M570 640L582 652M449 635L450 645M447 660L455 670M238 750L246 755M620 950L624 951M570 1005L576 1006M615 877L618 873 634 878M600 850L606 858 602 862M566 428L580 445M645 434L650 436M618 474L608 482M270 632L286 633";

function WorldMap() {
  return (
    <svg viewBox="36 33 1644 1068" className="absolute inset-0 size-full" role="img" aria-label="国別売上のマップ グラフ">
      <g stroke="#9f9f9f" strokeWidth="2" strokeLinejoin="round" fill="#dfdfdf">
        {GRAY_LAND.map((d) => (
          <path key={d} d={d} />
        ))}
        {COLORED.map(([fill, d]) => (
          <path key={d} d={d} fill={fill} />
        ))}
        <g fill="none">
          {BORDERS.map((d) => (
            <path key={d} d={d} />
          ))}
          <path d={ISLETS} stroke="#999" strokeWidth="3" />
          <path d="M596 915L602 932 613 945 628 954 640 956" stroke="#8c8c8c" strokeWidth="5" />
          <path d="M410 418L417 434" stroke="#9a9378" strokeWidth="6" />
        </g>
        <g transform="translate(822 0)">
          {GRAY_EAST.map((d) => (
            <path key={d} d={d} />
          ))}
          <g fill="none">
            {BORDERS_EAST.map((d) => (
              <path key={d} d={d} />
            ))}
          </g>
          <path d="M246 484L256 474 266 480 262 490 274 504 272 516 262 516 256 504Z" fill="#fff" />
          <path d="M168 496L170 482 184 478 190 484 200 480 215 490 226 496 200 500 182 496Z" fill="#fff" />
          {COLORED_EAST.map(([fill, d]) => (
            <path key={d} d={d} fill={fill} />
          ))}
          <circle cx="171" cy="834" r="4" />
          <circle cx="187" cy="820" r="4" />
          <path d={ISLETS_EAST} fill="none" stroke="#a3a3a3" strokeWidth="3" />
        </g>
      </g>
    </svg>
  );
}

function MapChart() {
  return (
    <figure className="relative h-full border border-[#d4d4d4] bg-white text-[#595959]">
      <WorldMap />
      <figcaption className={`pt-1.5 text-center text-[19px] font-light leading-7 ${CELL_FONT}`}>国別売上一覧</figcaption>
      <div className="mt-[18px] flex pl-[178px] text-[11px] leading-4 text-[#444]">
        <span className={`w-[80px] text-[12px] ${CELL_FONT}`}>売上（千円）</span>
        <div className="w-[105px]">
          <div className="mx-[9px] mt-0.5 h-[11px] border border-[#c9c4b4] bg-linear-to-r from-[#fff2cf] to-[#bf9000]" />
          <div className="mt-1 flex justify-between">
            <span>740</span>
            <span className="-mr-[3px]">2700</span>
          </div>
        </div>
      </div>
      <svg width="44" height="43" viewBox="0 0 44 43" className="absolute right-0 top-0" aria-hidden="true">
        <path d="M0 0h44v43z" fill="#ffe97f" />
        <circle cx="31" cy="12" r="8.5" fill="none" stroke="#444" />
        <path d="M31 10v7M31 7v1.5" stroke="#444" strokeWidth="1.5" />
      </svg>
      <p className="absolute bottom-[7px] right-[7px] whitespace-nowrap text-right text-[7px] leading-[10px]">
        Powered By Bing
        <br />© GeoNames, HERE, MSFT, Microsoft, NavInfo, Wikipedia
      </p>
      <span
        role="tooltip"
        className="absolute bottom-0 left-[48px] flex h-[20px] w-[75px] items-center justify-center whitespace-nowrap border border-[#767676] bg-white text-[10px] text-[#444] shadow-[3px_3px_2px_rgba(0,0,0,0.4)] [font-feature-settings:'palt']"
      >
        プロット エリア
      </span>
    </figure>
  );
}

function Sheet() {
  return (
    <main className="relative flex min-h-0 flex-1 bg-[#e6e6e6]">
      <div className="relative min-w-0 flex-1 overflow-hidden border-r border-[#999]">
        <Grid />
        {/* selection on A1 */}
        <div className="absolute left-[27px] top-[23px] h-[28px] w-[124px] border-2 border-[#217346]">
          <span className="absolute -bottom-[3px] -right-[3px] size-[6px] border-l border-t border-white bg-[#217346]" />
        </div>
        <div className="absolute left-[366px] top-[22px] h-[380px] w-[573px] rounded border-[7px] border-[#f00] pt-1 pr-[6px] pb-[6px] pl-[5px]">
          <MapChart />
        </div>
      </div>
      <div className="flex w-[21px] shrink-0 flex-col pl-[3px] pt-0.5">
        <button aria-label="上へスクロール" className="flex h-[15px] w-[15px] items-center justify-center border border-[#ababab] bg-white">
          <Caret className="rotate-180 text-[#666]" />
        </button>
        <div className="w-[15px] flex-1 bg-[#dadada]">
          <div className="h-[85%] border border-[#ababab] bg-white" />
        </div>
        <button aria-label="下へスクロール" className="flex h-[15px] w-[15px] items-center justify-center border border-[#ababab] bg-white">
          <Caret className="text-[#666]" />
        </button>
      </div>
      {/* step number over the chart frame */}
      <div className="absolute left-[641px] top-[-25px] flex size-[41px] items-center justify-center rounded-full bg-white shadow-md">
        <span className="flex size-[35px] items-center justify-center rounded-full border-2 border-[#f00] text-[26px] font-bold leading-none text-[#f00] [font-family:'Liberation_Sans_Narrow','DejaVu_Sans_Condensed',Roboto,sans-serif]">
          11
        </span>
      </div>
    </main>
  );
}

function SideArrow({ d, fill = "#666" }) {
  return (
    <svg width="5" height="8" viewBox="0 0 5 8" aria-hidden="true">
      <path d={d} fill={fill} />
    </svg>
  );
}

function SheetTabs() {
  return (
    <div className="flex h-[28px] shrink-0 items-start border-t border-[#999] bg-[#e6e6e6]">
      <div className="flex h-[25px] w-[100px] items-center gap-6 pl-[27px]">
        <button aria-label="前のシート"><SideArrow d="M5 0v8L0 4z" fill="#c0c0c0" /></button>
        <button aria-label="次のシート"><SideArrow d="M0 0v8l5-4z" fill="#c0c0c0" /></button>
      </div>
      <button className="-mt-px h-[25px] w-[73px] border-b-2 border-l border-r border-b-[#217346] border-l-[#999] border-r-[#999] bg-white pt-1 text-[13px] leading-[18px] text-[#217346]">
        Sheet1
      </button>
      <button aria-label="新しいシート" className="ml-[32px] mt-[4px]">
        <Icon w={17} h={17}>
          <circle cx="25" cy="25" r="23" stroke="#777" />
          <path d="M25 13v24M13 25h24" stroke="#777" strokeWidth="6" />
        </Icon>
      </button>
      <div className="flex-1" />
      <div className="mr-[14px] mt-[8px] flex flex-col gap-[3px]">
        <i className="size-0.5 bg-[#aaa]" />
        <i className="size-0.5 bg-[#aaa]" />
        <i className="size-0.5 bg-[#aaa]" />
      </div>
      <div className="mr-[19px] mt-[6px] flex h-[15px] w-[511px]">
        <button aria-label="左へスクロール" className="flex w-[15px] items-center justify-center border border-[#ababab] bg-white">
          <SideArrow d="M4 0v8L0 4z" />
        </button>
        <div className="flex-1 bg-[#dadada]">
          <div className="h-full w-[93%] border border-[#ababab] bg-white" />
        </div>
        <button aria-label="右へスクロール" className="flex w-[15px] items-center justify-center border border-[#ababab] bg-white">
          <SideArrow d="M1 0v8l4-4z" />
        </button>
      </div>
    </div>
  );
}

function StatusBar() {
  return (
    <footer className="flex h-[22px] shrink-0 items-center border-t border-[#c6c6c6] bg-[#f3f2f1] pl-2 text-[12px] text-[#555]">
      <span>準備完了</span>
      <Icon w={14} h={13} className="ml-[19px]">
        <path d="M5 16v22h34V5H20M5 16h34" stroke="#555" />
        <path d="M18 4h21v9H18z" fill="#555" stroke="none" />
        <circle cx="9" cy="8" r="8" fill="#555" stroke="none" />
        <path d="M11 22h6M20 22h6M29 22h6M11 30h6M20 30h6M29 30h6" stroke="#555" />
      </Icon>
      <div className="flex-1" />
      <button aria-label="標準" className="flex h-full w-[38px] items-center justify-center bg-[#c8c6c4]">
        <Icon w={14} h={13}>
          <path d="M2 2h37v35H2zM14 2v35M27 2v35M2 14h37M2 25h37" stroke="#666" />
        </Icon>
      </button>
      <button aria-label="ページ レイアウト" className="flex w-[38px] justify-center">
        <Icon w={14} h={13}>
          <path d="M2 2h37v35H2zM10 8h21v23H10zM15 14h11M15 20h11M15 26h11" stroke="#666" />
        </Icon>
      </button>
      <button aria-label="改ページ プレビュー" className="flex w-[38px] justify-center">
        <Icon w={14} h={13}>
          <path d="M2 2h37v35H2zM2 23h25V2M14 2v21" stroke="#666" />
        </Icon>
      </button>
      <button aria-label="縮小" className="ml-1 h-0.5 w-1.5 bg-[#666]" />
      <input
        type="range"
        aria-label="ズーム"
        min="0"
        max="100"
        defaultValue="50"
        className="mx-1 h-px w-[100px] appearance-none bg-[#999] [&::-webkit-slider-thumb]:h-[11px] [&::-webkit-slider-thumb]:w-[5px] [&::-webkit-slider-thumb]:appearance-none [&::-webkit-slider-thumb]:bg-[#666]"
      />
      <button aria-label="拡大">
        <Icon w={8} h={8}>
          <path d="M12 2v20M2 12h20" stroke="#666" strokeWidth="5" />
        </Icon>
      </button>
      <span className="w-[52px] pl-[11px]">100%</span>
    </footer>
  );
}

export default function App() {
  return (
    <div className={`flex h-screen flex-col overflow-hidden bg-[#e6e6e6] ${UI_FONT}`}>
      <TitleBar />
      <TabRow />
      <Ribbon />
      <FormulaBar />
      <Sheet />
      <SheetTabs />
      <StatusBar />
    </div>
  );
}
